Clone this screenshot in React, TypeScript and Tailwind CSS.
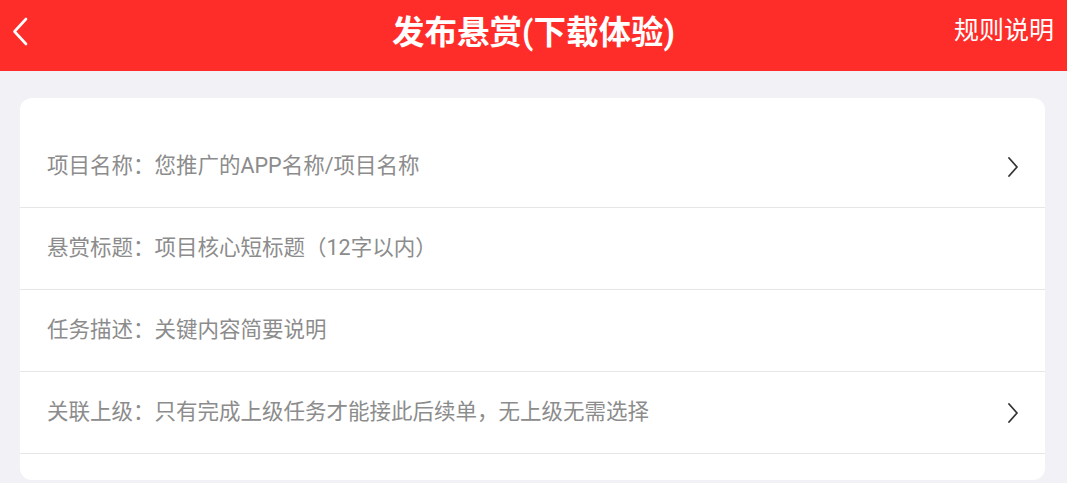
import React from "react";

const rows = [
  { label: "项目名称：", text: "您推广的APP名称/项目名称", arrow: true },
  { label: "悬赏标题：", text: "项目核心短标题（12字以内）", arrow: false },
  { label: "任务描述：", text: "关键内容简要说明", arrow: false },
  { label: "关联上级：", text: "只有完成上级任务才能接此后续单，无上级无需选择", arrow: true },
];

function Chevron({ className }: { className?: string }) {
  return (
    <svg viewBox="0 0 10 20" className={className} fill="none">
      <path d="M1 1 L9 10 L1 19" stroke="currentColor" strokeWidth="1.8" strokeLinecap="round" strokeLinejoin="round" />
    </svg>
  );
}

export default function App() {
  return (
    <div
      className="w-[1067px] h-[483px] overflow-hidden bg-[#f2f2f6] flex flex-col"
      style={{ fontFamily: 'Roboto, "Noto Sans CJK SC", sans-serif' }}
    >
      <header className="relative h-[71px] bg-[#ff2d29] flex items-center justify-center shrink-0">
        <button className="absolute left-[12px] top-[17px] w-[16px] h-[29px] text-white">
          <svg viewBox="0 0 16 29" className="w-[16px] h-[29px]" fill="none">
            <path d="M14 2 L2.5 14.5 L14 27" stroke="currentColor" strokeWidth="2.6" strokeLinecap="round" strokeLinejoin="round" />
          </svg>
        </button>
        <h1 className="text-white font-bold text-[32.5px] leading-none -mt-[4px]">发布悬赏(下载体验)</h1>
        <span className="absolute right-[13px] top-[18px] text-white text-[25px] leading-none">规则说明</span>
      </header>
      <div className="pl-[20px] pr-[22px] pt-[27px]">
        <div className="bg-white rounded-[12px] pt-[28px] pb-[26px]">
          {rows.map((r, i) => (
            <div
              key={i}
              className="h-[82px] border-b-[1.5px] border-[#e6e6e6] flex items-center pl-[27px] pr-[27px]"
            >
              <span className="flex-1 text-[21.5px] text-[#8c8c8c] whitespace-nowrap">
                {r.label}
                {r.text}
              </span>
              {r.arrow && <Chevron className="w-[10px] h-[20px] text-[#333333]" />}
            </div>
          ))}
        </div>
      </div>
    </div>
  );
}
